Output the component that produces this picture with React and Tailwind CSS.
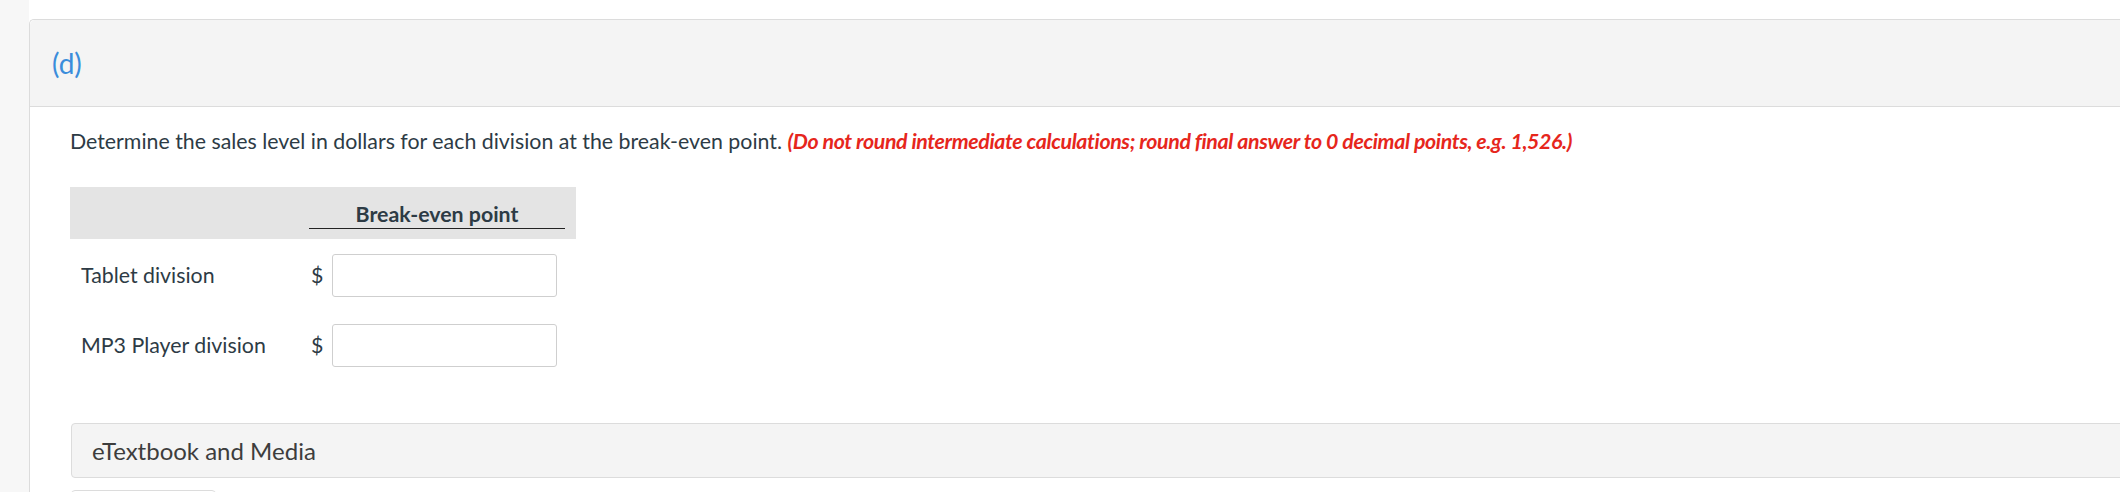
import { useState } from 'react';

const rows = [
  { label: 'Tablet division', key: 'tablet' },
  { label: 'MP3 Player division', key: 'mp3' },
];

export default function App() {
  const [values, setValues] = useState({ tablet: '', mp3: '' });

  return (
    <div className="flex w-[2120px] h-[492px] overflow-hidden bg-white font-['Lato',sans-serif] text-[#2d3b45]">
      {/* franja lateral */}
      <div className="w-[29px] shrink-0 bg-[#f7f7f7]" />

      {/* tarjeta de la pregunta */}
      <div className="mt-[19px] w-[2200px] shrink-0 border-l border-t border-[#dcdcdc] rounded-tl-[5px]">
        <div className="h-[87px] bg-[#f4f4f4] border-b border-[#dcdcdc] rounded-tl-[5px] flex items-center pl-[22px]">
          <span className="text-[28px] text-[#3b8ddb]">(d)</span>
        </div>

        <div className="pl-[40px]">
          <p className="mt-[20px] text-[21.33px] leading-[29px]">
            Determine the sales level in dollars for each division at the break-even point.{' '}
            <span className="font-bold italic text-[#e6261c] tracking-[-0.37px]">
              (Do not round intermediate calculations; round final answer to 0 decimal points, e.g. 1,526.)
            </span>
          </p>

          {/* tabla */}
          <div className="mt-[31px] w-[506px]">
            <div className="h-[52px] bg-[#e4e4e4] flex items-end pl-[239px] pr-[11px] pb-[10px]">
              <div className="w-[256px] border-b border-[#222] text-center text-[21.33px] font-bold leading-[27px]">
                Break-even point
              </div>
            </div>

            <div className="mt-[15px] flex flex-col gap-[27px]">
              {rows.map((row) => (
                <div key={row.key} className="flex items-center h-[43px]">
                  <span className="w-[241px] pl-[11px] text-[21.33px]">{row.label}</span>
                  <span className="w-[21px] text-[21.33px]">$</span>
                  <input
                    type="text"
                    value={values[row.key]}
                    onChange={(e) => setValues({ ...values, [row.key]: e.target.value })}
                    className="w-[225px] h-[43px] border border-[#cfcfcf] rounded-[3px] bg-white px-2 outline-none"
                  />
                </div>
              ))}
            </div>
          </div>

          {/* eTextbook */}
          <div className="mt-[56px] h-[55px] bg-[#f4f4f4] border border-[#dcdcdc] rounded-[4px] flex items-center pl-[20px] ml-px">
            <span className="text-[24px] text-[#3d3d3d]">eTextbook and Media</span>
          </div>
          <div className="mt-[12px] ml-px w-[145px] h-[20px] border border-[#dcdcdc] rounded-[4px]" />
        </div>
      </div>
    </div>
  );
}
